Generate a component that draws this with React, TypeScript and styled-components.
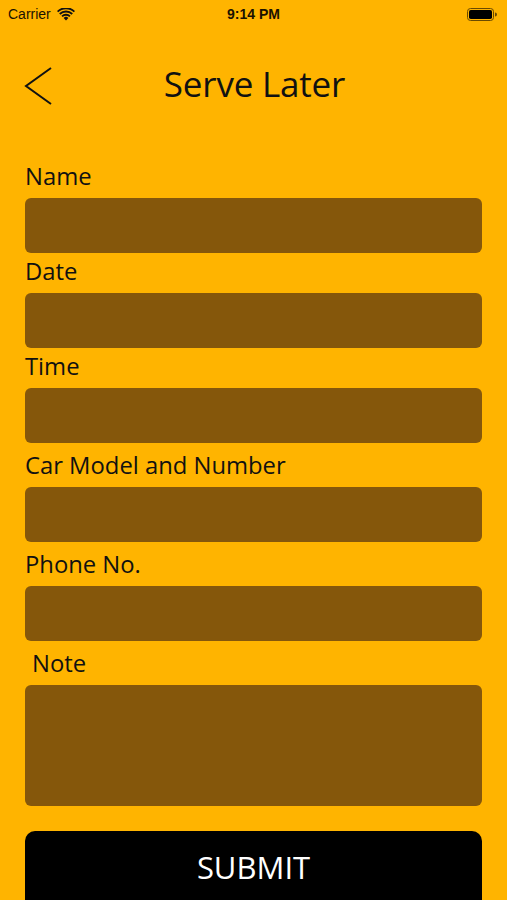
import styled, { createGlobalStyle } from "styled-components";

const GlobalStyle = createGlobalStyle`
  html, body {
    margin: 0;
    padding: 0;
    background: #ffb400;
  }
  * { box-sizing: border-box; }
`;

const fields = [
  { label: "Name", gap: 0 },
  { label: "Date", gap: 0 },
  { label: "Time", gap: 0 },
  { label: "Car Model and Number", gap: 4 },
  { label: "Phone No.", gap: 4 },
];

export default function App() {
  return (
    <Screen>
      <GlobalStyle />
      <StatusBar>
        <Carrier>
          Carrier
          <svg width="18" height="13" viewBox="0 0 18 13">
            <path d="M9 12.5 L6.6 9.9 A3.5 3.5 0 0 1 11.4 9.9 Z" fill="#111" />
            <path d="M4.4 7.7 A6.6 6.6 0 0 1 13.6 7.7 L12.3 9.1 A4.7 4.7 0 0 0 5.7 9.1 Z" fill="#111" />
            <path d="M2.1 5.3 A9.9 9.9 0 0 1 15.9 5.3 L14.6 6.7 A8 8 0 0 0 3.4 6.7 Z" fill="#111" />
            <path d="M0 2.9 A13 13 0 0 1 18 2.9 L16.8 4.3 A11.2 11.2 0 0 0 1.2 4.3 Z" fill="#111" />
          </svg>
        </Carrier>
        <Clock>9:14 PM</Clock>
        <Battery>
          <svg width="30" height="13" viewBox="0 0 30 13">
            <rect x="0.5" y="0.5" width="26" height="12" rx="3" fill="none" stroke="#6a4a00" strokeWidth="1" />
            <rect x="2" y="2" width="23" height="9" rx="1.8" fill="#000" />
            <path d="M28 4.5 a1.5 1.5 0 0 1 0 4 Z" fill="#6a4a00" />
          </svg>
        </Battery>
      </StatusBar>

      <NavBar>
        <BackButton aria-label="Back">
          <svg width="30" height="40" viewBox="0 0 30 40">
            <path d="M28 2 L3 20 L28 38" fill="none" stroke="#111" strokeWidth="2" />
          </svg>
        </BackButton>
        <Title>Serve Later</Title>
      </NavBar>

      <Form>
        {fields.map((f) => (
          <Field key={f.label} $gap={f.gap}>
            <Label>{f.label}</Label>
            <Input />
          </Field>
        ))}
        <Field $gap={4}>
          <Label $indent>Note</Label>
          <NoteArea />
        </Field>
        <SubmitButton>SUBMIT</SubmitButton>
      </Form>
    </Screen>
  );
}

const Screen = styled.div`
  width: 507px;
  height: 900px;
  overflow: hidden;
  background: #ffb400;
  font-family: "Open Sans", "Noto Sans", sans-serif;
  color: #111;
`;

const StatusBar = styled.div`
  display: grid;
  grid-template-columns: 1fr auto 1fr;
  align-items: center;
  height: 28px;
  padding: 0 8px;
  font-family: "Liberation Sans", Arial, sans-serif;
  font-size: 14px;
`;

const Carrier = styled.div`
  display: flex;
  align-items: center;
  gap: 6px;
  color: #1a1200;
`;

const Clock = styled.div`
  font-weight: 700;
  color: #1a1200;
`;

const Battery = styled.div`
  display: flex;
  justify-content: flex-end;
  padding-right: 2px;
`;

const NavBar = styled.div`
  position: relative;
  display: flex;
  align-items: center;
  justify-content: center;
  height: 110px;
`;

const BackButton = styled.button`
  position: absolute;
  left: 23px;
  top: 38px;
  background: none;
  border: none;
  padding: 0;
  display: flex;
`;

const Title = styled.h1`
  margin: 0 0 0 2px;
  font-size: 35px;
  font-weight: 400;
  letter-spacing: -0.2px;
`;

const Form = styled.div`
  display: flex;
  flex-direction: column;
  padding: 20px 25px 0;
`;

const Field = styled.div<{ $gap: number }>`
  display: flex;
  flex-direction: column;
  margin-top: ${(p) => p.$gap}px;
`;

const Label = styled.div<{ $indent?: boolean }>`
  height: 40px;
  display: flex;
  align-items: center;
  padding-bottom: 5px;
  padding-left: ${(p) => (p.$indent ? 7 : 0)}px;
  font-size: 23.8px;
  color: #111;
`;

const Input = styled.div`
  height: 55px;
  border-radius: 6px;
  background: #85570b;
`;

const NoteArea = styled.div`
  height: 121px;
  border-radius: 6px;
  background: #85570b;
`;

const SubmitButton = styled.button`
  margin-top: 25px;
  height: 80px;
  padding-bottom: 10px;
  border: none;
  border-radius: 10px;
  background: #000;
  color: #fff;
  font-family: "Open Sans", "Noto Sans", sans-serif;
  font-size: 31px;
  font-weight: 400;
`;
